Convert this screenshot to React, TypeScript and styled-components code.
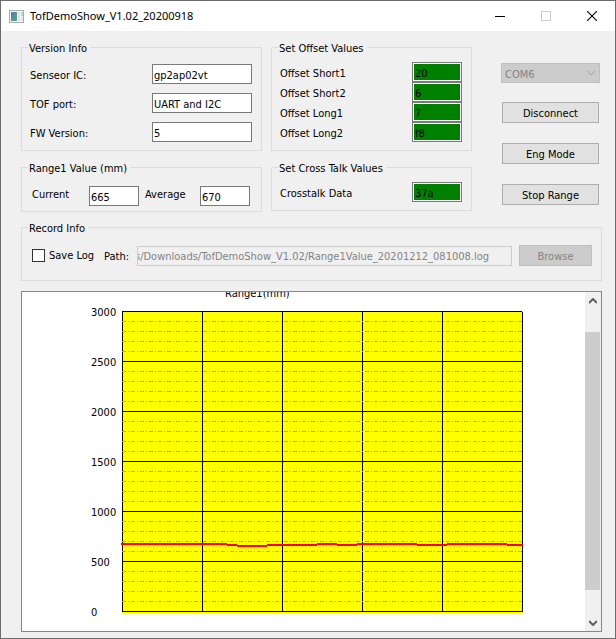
import React from "react";
import styled, { createGlobalStyle } from "styled-components";

const uiFont = '"DejaVu Sans Condensed", "Noto Sans", sans-serif';

const GlobalStyle = createGlobalStyle`
  *, *::before, *::after { box-sizing: border-box; }
  body { margin: 0; background: #f0f0f0; }
  body, button, input, select {
    font-family: ${uiFont};
    font-size: 11px;
    line-height: 13px;
    color: #000;
  }
`;

const Window = styled.div`
  display: flex;
  flex-direction: column;
  min-height: 100vh;
  border: 1px solid #6b6b6b;
  background: #f0f0f0;
`;

const TitleBar = styled.header`
  display: flex;
  align-items: center;
  height: 30px;
  padding-left: 8px;
  background: #fff;
`;

const Title = styled.h1`
  flex: 1;
  margin: 0 0 0 6px;
  font: 400 11px/16px "Noto Sans", sans-serif;
  white-space: nowrap;
`;

const CaptionButton = styled.button`
  display: grid;
  place-items: center;
  width: 46px;
  height: 29px;
  padding: 0;
  border: 0;
  background: transparent;
`;

const Content = styled.main`
  display: flex;
  flex: 1;
  flex-direction: column;
  padding: 10px 13px 6px 20px;
`;

const Panels = styled.div`
  display: grid;
  grid-template-columns: minmax(0, 241fr) minmax(0, 201fr) minmax(0, 121fr);
  gap: 10px 9px;
  align-items: start;
`;

const Group = styled.fieldset`
  min-width: 0;
  margin: 0;
  padding: 0;
  border: 1px solid #dcdcdc;
`;

const Legend = styled.legend`
  height: 13px;
  margin-left: 6px;
  padding: 0 3px 0 1px;
  line-height: 15px;
  white-space: nowrap;
`;

const Rows = styled.div<{ $gap: number; $field: number; $top: number }>`
  display: grid;
  grid-template-columns: 1fr ${(p) => p.$field}px;
  row-gap: ${(p) => p.$gap}px;
  align-items: center;
  padding: ${(p) => p.$top}px 9px 8px 8px;
`;

const Label = styled.label`
  padding-top: 2px;
  white-space: nowrap;
`;

const Field = styled.input`
  width: 100%;
  min-width: 0;
  height: 20px;
  padding: 2px 1px 0;
  border: 1px solid #7a7a7a;
  border-radius: 0;
  background: #fff;
  outline: none;
`;

const GreenField = styled(Field)`
  padding-left: 2px;
  background: #008000;
  box-shadow: inset 0 0 0 1px #fff;
`;

const RangeRow = styled.div`
  display: grid;
  grid-template-columns: 57px 50px 1fr 50px;
  align-items: start;
  padding: 12px 11px 5px 10px;
`;

const RangeLabel = styled(Label)<{ $indent: number }>`
  padding-left: ${(p) => p.$indent}px;
`;

const Side = styled.div`
  display: flex;
  grid-column: 3;
  grid-row: 1 / span 2;
  flex-direction: column;
  gap: 19px;
  padding: 22px 2px 0 20px;
`;

const ComboBox = styled.div`
  position: relative;
  height: 20px;
`;

const Combo = styled.select`
  display: block;
  width: 100%;
  height: 20px;
  padding: 2px 3px 0;
  border: 1px solid #bfbfbf;
  border-radius: 0;
  appearance: none;
  background: #ccc;
  color: #838383;
  opacity: 1;
`;

const ComboArrow = styled.svg`
  position: absolute;
  top: 7px;
  right: 4px;
  pointer-events: none;
`;

const Actions = styled.div`
  display: grid;
  gap: 20px;
  padding: 0 1px;
`;

const PushButton = styled.button`
  height: 21px;
  padding: 2px 0 0;
  border: 1px solid #adadad;
  background: #e1e1e1;
  text-align: center;
  white-space: nowrap;

  &:disabled {
    border-color: #bfbfbf;
    background: #ccc;
    color: #838383;
  }
`;

const RecordGroup = styled(Group)`
  margin-top: 9px;
`;

const RecordRow = styled.div`
  display: flex;
  align-items: center;
  padding: 11px 9px 14px 10px;
`;

const CheckLabel = styled.label`
  display: flex;
  align-items: center;
  gap: 4px;
  width: 72px;
  white-space: nowrap;
`;

const Check = styled.input`
  width: 13px;
  height: 13px;
  margin: 0;
  border: 1px solid #333;
  appearance: none;
  background: #fff;

  &:checked { background: #333; }
`;

const PathLabel = styled(Label)`
  width: 33px;
`;

const PathField = styled(Field)`
  flex: 1;
  padding-left: 0;
  border-color: #ccc;
  background: #f0f0f0;
  color: #838383;
  text-indent: -3px;
`;

const BrowseButton = styled(PushButton)`
  width: 73px;
  margin-left: 7px;
`;

const ScrollArea = styled.section`
  display: flex;
  flex: 1;
  min-height: 341px;
  margin-top: 10px;
  border: 1px solid #828790;
  background: #fff;
`;

const Viewport = styled.div`
  flex: 1;
  min-width: 0;
  overflow: hidden;
`;

const Chart = styled.svg`
  display: block;
  font-family: ${uiFont};
  font-size: 11px;
`;

const ScrollBar = styled.div`
  display: flex;
  flex-direction: column;
  width: 16px;
  padding-right: 1px;
  background: #f0f0f0;
`;

const ScrollButton = styled.button`
  display: grid;
  place-items: center;
  height: 17px;
  padding: 0;
  border: 0;
  background: #f0f0f0;
`;

const Track = styled.div`
  display: flex;
  flex: 1;
  padding: 23px 0 24px;
`;

const Thumb = styled.div`
  flex: 1;
  background: #cdcdcd;
`;

const versionRows = [
  { id: "sensor", label: "Senseor IC:", value: "gp2ap02vt" },
  { id: "port", label: "TOF port:", value: "UART and I2C" },
  { id: "fw", label: "FW Version:", value: "5" },
];

const offsetRows = [
  { id: "short1", label: "Offset Short1", value: "20" },
  { id: "short2", label: "Offset Short2", value: "6" },
  { id: "long1", label: "Offset Long1", value: "7" },
  { id: "long2", label: "Offset Long2", value: "f8" },
];

const axisValues = [3000, 2500, 2000, 1500, 1000, 500, 0];
const columns = [0, 1, 2, 3, 4, 5];
const minorRows = Array.from({ length: 30 }, (_, i) => i).filter((i) => i % 5 !== 0);

// Range samples as [start x, end x, y] in chart coordinates
const samples = [
  [99, 205, 251],
  [205, 215, 252],
  [215, 245, 253],
  [245, 295, 252],
  [295, 315, 251],
  [315, 335, 252],
  [335, 395, 251],
  [395, 425, 252],
  [425, 485, 251],
  [485, 501, 252],
];

function RangeChart() {
  return (
    <Chart width="563" height="339" role="img" aria-label="Range1 in millimetres">
      <defs>
        <pattern id="dashdot" x="100" y="0" width="9" height="1" patternUnits="userSpaceOnUse">
          <rect width="4" height="1" fill="#a0a0a4" />
          <rect x="6" width="1" height="1" fill="#a0a0a4" />
        </pattern>
      </defs>
      <text x="203" y="5">Range1(mm)</text>
      <g shapeRendering="crispEdges">
        <rect x="100" y="19" width="401" height="302" fill="#ff0" />
        {columns.map((c) => (
          <rect key={c} x={100 + c * 80} y={c === 5 ? 20 : 19} width="1" height={c === 5 ? 300 : 301} />
        ))}
        {axisValues.map((v, i) => (
          <rect key={v} x="100" y={19 + i * 50} width="400" height="1" />
        ))}
        {minorRows.map((i) => (
          <rect key={i} x="100" y={19 + i * 10} width="400" height="1" fill="url(#dashdot)" />
        ))}
        {samples.map(([from, to, y]) => (
          <rect key={from} x={from} y={y} width={to - from} height="2" fill="#f00" />
        ))}
      </g>
      {axisValues.map((v, i) => (
        <text key={v} x="69" y={24 + i * 50}>{v}</text>
      ))}
    </Chart>
  );
}

export default function App() {
  return (
    <>
      <GlobalStyle />
      <Window>
        <TitleBar>
          <svg width="15" height="13" viewBox="0 0 15 13" aria-hidden="true">
            <defs>
              <linearGradient id="pane" x1="0" y1="0" x2="1" y2="1">
                <stop offset="0" stopColor="#4a7fa5" />
                <stop offset="1" stopColor="#5fa886" />
              </linearGradient>
            </defs>
            <rect width="15" height="13" fill="#a9adb2" />
            <rect x="1" y="1" width="13" height="11" fill="#f4f6f7" />
            <rect x="2" y="2" width="6" height="9" fill="url(#pane)" />
            <rect x="9" y="2" width="2" height="9" fill="#dfe5e4" />
            <rect x="12" y="2" width="2" height="4" fill="#b9d6bd" />
            <rect x="12" y="7" width="2" height="4" fill="#dde3e6" />
          </svg>
          <Title>TofDemoShow_V1.02_20200918</Title>
          <CaptionButton aria-label="Minimize">
            <svg width="10" height="10"><rect y="5" width="10" height="1" /></svg>
          </CaptionButton>
          <CaptionButton aria-label="Maximize" disabled>
            <svg width="10" height="10" shapeRendering="crispEdges">
              <path d="M0 0H10V10H0ZM1 1V9H9V1Z" fill="#ccc" fillRule="evenodd" />
            </svg>
          </CaptionButton>
          <CaptionButton aria-label="Close">
            <svg width="10" height="10"><path d="M0 0L10 10M10 0L0 10" stroke="#000" strokeWidth="1.1" /></svg>
          </CaptionButton>
        </TitleBar>

        <Content>
          <Panels>
            <Group>
              <Legend>Version Info</Legend>
              <Rows $gap={9} $field={100} $top={10}>
                {versionRows.map((r) => (
                  <React.Fragment key={r.id}>
                    <Label htmlFor={r.id}>{r.label}</Label>
                    <Field id={r.id} defaultValue={r.value} />
                  </React.Fragment>
                ))}
              </Rows>
            </Group>

            <Group>
              <Legend>Set Offset Values</Legend>
              <Rows $gap={0} $field={50} $top={8}>
                {offsetRows.map((r) => (
                  <React.Fragment key={r.id}>
                    <Label htmlFor={r.id}>{r.label}</Label>
                    <GreenField id={r.id} defaultValue={r.value} />
                  </React.Fragment>
                ))}
              </Rows>
            </Group>

            <Group>
              <Legend>Range1 Value (mm)</Legend>
              <RangeRow>
                <RangeLabel $indent={0} htmlFor="current">Current</RangeLabel>
                <Field id="current" defaultValue="665" />
                <RangeLabel $indent={6} htmlFor="average">Average</RangeLabel>
                <Field id="average" defaultValue="670" />
              </RangeRow>
            </Group>

            <Group>
              <Legend>Set Cross Talk Values</Legend>
              <Rows $gap={0} $field={50} $top={8}>
                <Label htmlFor="crosstalk">Crosstalk Data</Label>
                <GreenField id="crosstalk" defaultValue="37a" />
              </Rows>
            </Group>

            <Side>
              <ComboBox>
                <Combo aria-label="Serial port" disabled>
                  <option>COM6</option>
                </Combo>
                <ComboArrow width="10" height="6" viewBox="0 0 10 6" aria-hidden="true">
                  <path d="M1 1L5 5L9 1" fill="none" stroke="#a0a0a0" />
                </ComboArrow>
              </ComboBox>
              <Actions>
                <PushButton>Disconnect</PushButton>
                <PushButton>Eng Mode</PushButton>
                <PushButton>Stop Range</PushButton>
              </Actions>
            </Side>
          </Panels>

          <RecordGroup>
            <Legend>Record Info</Legend>
            <RecordRow>
              <CheckLabel>
                <Check type="checkbox" />
                Save Log
              </CheckLabel>
              <PathLabel htmlFor="path">Path:</PathLabel>
              <PathField
                id="path"
                disabled
                defaultValue="s/Downloads/TofDemoShow_V1.02/Range1Value_20201212_081008.log"
              />
              <BrowseButton disabled>Browse</BrowseButton>
            </RecordRow>
          </RecordGroup>

          <ScrollArea>
            <Viewport>
              <RangeChart />
            </Viewport>
            <ScrollBar>
              <ScrollButton aria-label="Scroll up">
                <svg width="8" height="6" viewBox="0 0 8 6">
                  <path d="M0 5L4 1L8 5" fill="none" stroke="#606060" strokeWidth="2" />
                </svg>
              </ScrollButton>
              <Track>
                <Thumb />
              </Track>
              <ScrollButton aria-label="Scroll down">
                <svg width="8" height="6" viewBox="0 0 8 6">
                  <path d="M0 1L4 5L8 1" fill="none" stroke="#606060" strokeWidth="2" />
                </svg>
              </ScrollButton>
            </ScrollBar>
          </ScrollArea>
        </Content>
      </Window>
    </>
  );
}
